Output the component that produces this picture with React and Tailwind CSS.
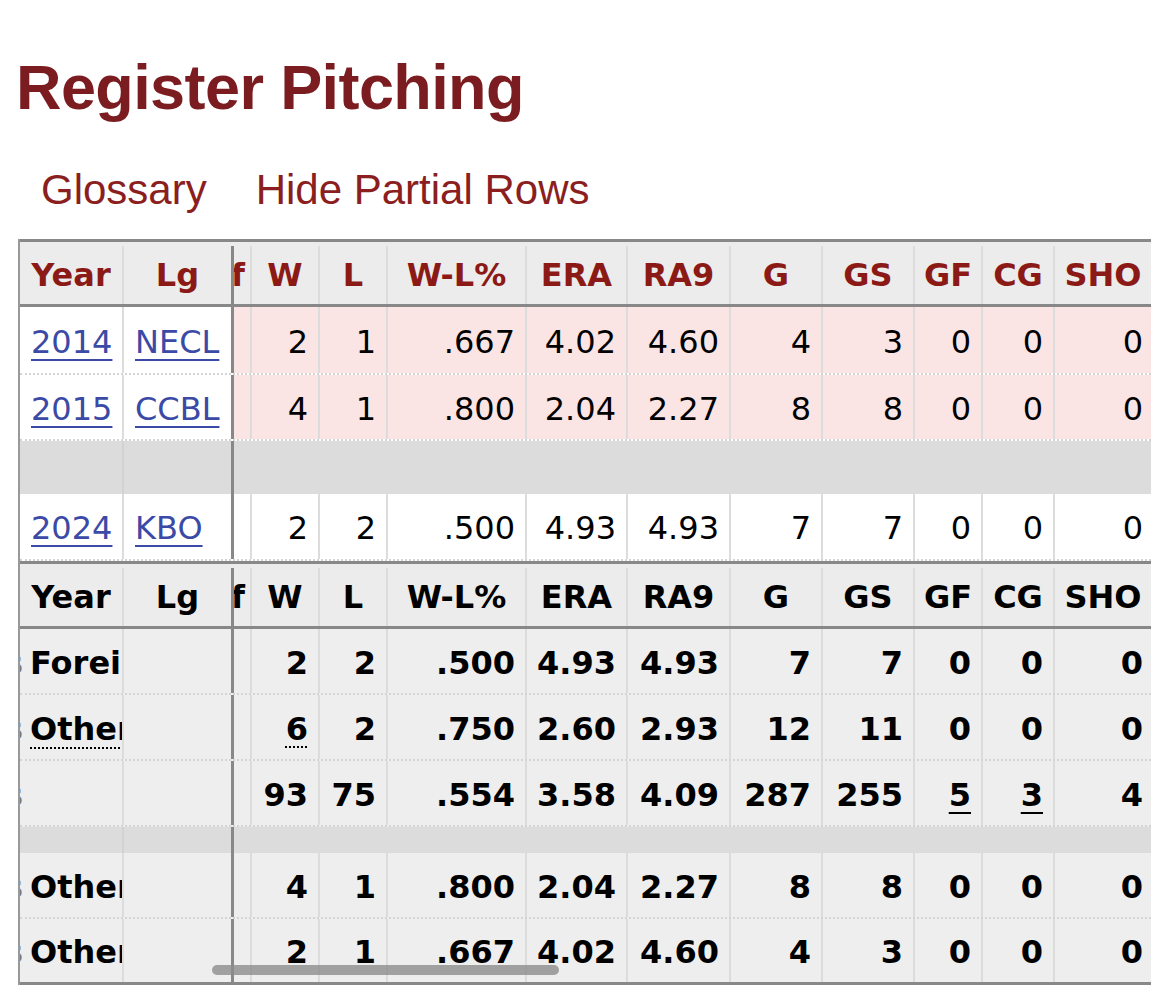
const cols = [
  { k: 'W', w: 'w-[68px]' },
  { k: 'L', w: 'w-[68px]' },
  { k: 'W-L%', w: 'w-[139px]' },
  { k: 'ERA', w: 'w-[101px]' },
  { k: 'RA9', w: 'w-[103px]' },
  { k: 'G', w: 'w-[92px]' },
  { k: 'GS', w: 'w-[92px]' },
  { k: 'GF', w: 'w-[68px]' },
  { k: 'CG', w: 'w-[72px]' },
  { k: 'SHO', w: 'w-[96px]' },
]

const seasons = [
  { year: '2014', lg: 'NECL', h: 'h-[68px]', bg: 'bg-[#fbe4e4]', v: ['2', '1', '.667', '4.02', '4.60', '4', '3', '0', '0', '0'] },
  { year: '2015', lg: 'CCBL', h: 'h-[66px]', bg: 'bg-[#fbe4e4]', v: ['4', '1', '.800', '2.04', '2.27', '8', '8', '0', '0', '0'] },
  { spacer: true, h: 'h-[53px]' },
  { year: '2024', lg: 'KBO', h: 'h-[67px]', bg: 'bg-white', v: ['2', '2', '.500', '4.93', '4.93', '7', '7', '0', '0', '0'] },
]

const totals = [
  { label: 'Foreign', v: ['2', '2', '.500', '4.93', '4.93', '7', '7', '0', '0', '0'] },
  { label: 'Other', abbr: true, v: ['6', '2', '.750', '2.60', '2.93', '12', '11', '0', '0', '0'], dot: [0] },
  { label: '', v: ['93', '75', '.554', '3.58', '4.09', '287', '255', '5', '3', '4'], line: [7, 8] },
  { spacer: true },
  { label: 'Other', v: ['4', '1', '.800', '2.04', '2.27', '8', '8', '0', '0', '0'] },
  { label: 'Other', v: ['2', '1', '.667', '4.02', '4.60', '4', '3', '0', '0', '0'], last: true },
]

function HeaderRow({ red }) {
  const tc = red ? 'text-[#8b1a16]' : 'text-black'
  return (
    <div className={`flex h-[68px] border-y-[3px] border-[#888] bg-[#ececec] pt-[4px] font-bold ${tc}`}>
      <div className="flex w-[104px] shrink-0 items-center justify-center border-r-2 border-[#dcdcdc]">Year</div>
      <div className="flex w-[110px] shrink-0 items-center justify-center border-r-[3px] border-[#888]">Lg</div>
      <div className="flex w-[18px] shrink-0 items-center justify-end overflow-hidden border-r-2 border-[#dcdcdc] pr-[5px]">
        <span className="whitespace-nowrap">Aff</span>
      </div>
      {cols.map((c, i) => (
        <div
          key={c.k}
          className={`flex ${c.w} shrink-0 items-center justify-center ${i < cols.length - 1 ? 'border-r-2 border-[#dcdcdc]' : ''}`}
        >
          {c.k}
        </div>
      ))}
    </div>
  )
}

function StatCells({ v, bg, dot = [], line = [] }) {
  return cols.map((c, i) => (
    <div
      key={c.k}
      className={`flex ${c.w} shrink-0 items-center justify-end pt-[3px] ${bg} ${i < cols.length - 1 ? 'border-r-2 border-[#dcdcdc] pr-[10px]' : 'pr-[8px]'}`}
    >
      <span
        className={
          dot.includes(i)
            ? 'underline decoration-dotted decoration-2 underline-offset-[7px]'
            : line.includes(i)
              ? 'underline decoration-2 underline-offset-[6px]'
              : ''
        }
      >
        {v[i]}
      </span>
    </div>
  ))
}

function Spacer({ h }) {
  return (
    <div className={`flex ${h} bg-[#dcdcdc]`}>
      <div className="w-[104px] shrink-0 border-r-2 border-[#d2d2d2]" />
      <div className="w-[110px] shrink-0 border-r-[3px] border-[#888]" />
      <div className="flex-1" />
    </div>
  )
}

export default function App() {
  return (
    <div className="min-h-[987px] w-[1170px] bg-white font-['DejaVu_Sans',Verdana,sans-serif] text-[32px]">
      <h1 className="pl-[16px] pt-[56px] font-['Liberation_Sans',Arial,sans-serif] text-[63px] font-bold leading-none tracking-[-0.6px] text-[#7b1c20]">
        Register Pitching
      </h1>
      <div className="mt-[50px] flex gap-[49px] pl-[41px] font-['Liberation_Sans',Arial,sans-serif] text-[42px] leading-none text-[#8b1e1e]">
        <span>Glossary</span>
        <span>Hide Partial Rows</span>
      </div>

      <div className="relative ml-[18px] mt-[28px] w-[1133px] overflow-hidden border-l-2 border-[#999] leading-none">
        <HeaderRow red />
        {seasons.map((r, idx) =>
          r.spacer ? (
            <Spacer key={idx} h={r.h} />
          ) : (
            <div key={r.year} className={`flex ${r.h} border-b-2 border-dotted border-[#d4d4d4]`}>
              <div className="flex w-[104px] shrink-0 items-center border-r-2 border-[#dcdcdc] bg-white pl-[11px] pt-[3px]">
                <a className="text-[#3b4aa6] underline decoration-2 underline-offset-[6px]">{r.year}</a>
              </div>
              <div className="flex w-[110px] shrink-0 items-center border-r-[3px] border-[#888] bg-white pl-[11px] pt-[3px]">
                <a className="text-[#3b4aa6] underline decoration-2 underline-offset-[6px]">{r.lg}</a>
              </div>
              <div className={`w-[18px] shrink-0 border-r-2 border-[#dcdcdc] ${r.bg}`} />
              <StatCells v={r.v} bg={r.bg} />
            </div>
          )
        )}
        <HeaderRow />
        {totals.map((r, idx) =>
          r.spacer ? (
            <Spacer key={idx} h="h-[26px]" />
          ) : (
            <div
              key={idx}
              className={`flex h-[66px] bg-[#eeeeee] font-bold ${r.last ? 'border-b-[3px] border-[#888]' : 'border-b-2 border-dotted border-[#d4d4d4]'}`}
            >
              <div className="flex w-[104px] shrink-0 items-center overflow-hidden whitespace-nowrap border-r-2 border-[#dcdcdc] pt-[3px]">
                <span className="ml-[-16px] text-[#777]">s</span>
                {r.label && (
                  <span
                    className={`ml-[7px] ${r.abbr ? 'underline decoration-dotted decoration-2 underline-offset-[8px]' : ''}`}
                  >
                    {r.label} Leagues
                  </span>
                )}
              </div>
              <div className="w-[110px] shrink-0 border-r-[3px] border-[#888]" />
              <div className="w-[18px] shrink-0 border-r-2 border-[#dcdcdc]" />
              <StatCells v={r.v} bg="bg-[#eeeeee]" dot={r.dot} line={r.line} />
            </div>
          )
        )}
        <div className="absolute left-[192px] top-[726px] h-[10px] w-[347px] rounded-full bg-[#8c8c8c]/80" />
      </div>
    </div>
  )
}
